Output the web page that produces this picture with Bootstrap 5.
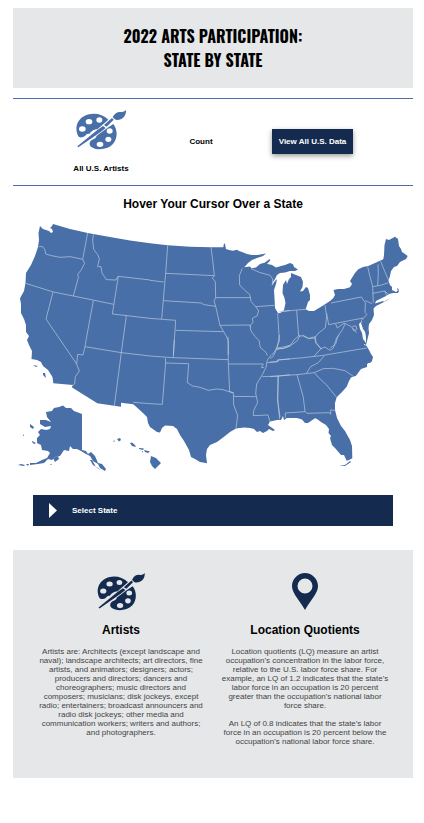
<!DOCTYPE html>
<html lang="en">
<head>
<meta charset="utf-8">
<meta name="viewport" content="width=device-width, initial-scale=1">
<title>2022 Arts Participation: State by State</title>
<link href="https://cdn.jsdelivr.net/npm/bootstrap@5.3.0/dist/css/bootstrap.min.css" rel="stylesheet">
<style>
:root { --navy: #142b4f; --blue: #486fa7; --panel: #e5e7e9; }
body { font-family: "Liberation Sans", Arial, sans-serif; font-size: 8px; line-height: 9px; color: #000; background: #fff; }
.page { padding: 8px 11px 40px 13px; }
.panel { background: var(--panel); }
.page-title { font-family: Oswald, "Liberation Sans Narrow", "Liberation Sans", sans-serif; font-size: 16px; line-height: 24px; font-weight: 700; }
.summary { display: grid; grid-template-columns: 112fr 88fr 135fr; margin-top: 10px; padding: 11px 33px 12px 32px; border: solid var(--blue); border-width: 1px 0; }
.summary-artists { gap: 14px; }
.summary .palette { width: 50px; height: 40px; color: var(--blue); }
.btn-navy { background: var(--navy); color: #fff; font-size: 8px; line-height: 9px; font-weight: 700; padding: 8px 7px; border: 0; border-radius: 0; white-space: nowrap; box-shadow: 0 2px 5px rgba(0,0,0,.4); }
.btn-navy:hover { background: var(--blue); color: #fff; }
.section-title { font-size: 12px; line-height: 14px; font-weight: 700; }
.map-title { padding: 11px 0 1px; }
.map { display: block; width: 100%; height: auto; }
.select-wrap { padding: 15px 20px 24px; }
.select-bar { background: var(--navy); color: #fff; font-size: 8px; line-height: 9px; font-weight: 700; padding: 8px 16px; gap: 14px; border: 0; }
.info { padding: 23px 16px; }
.info p { color: #444; margin-bottom: 9px; }
.info .icon-box { height: 40px; color: var(--navy); }
.info .section-title { margin: 10px 0; }
.info .col { padding: 0 8px; }
</style>
<script src="https://cdn.jsdelivr.net/npm/bootstrap@5.3.0/dist/js/bootstrap.bundle.min.js"></script>
</head>
<body>
<svg width="0" height="0" class="position-absolute" aria-hidden="true">
  <symbol id="palette" viewBox="0 0 150 120">
    <path fill="currentColor" fill-rule="evenodd" d="M7 79C-4 58 1 34 20 21C43 6 76 8 97 29L64 58C52 58 45 65 40 72C29 69 30 81 18 82C13 83 9 82 7 79ZM29 57a10 8 0 1 0-20 0a10 8 0 1 0 20 0ZM49 35a10 8 0 1 0-20 0a10 8 0 1 0 20 0ZM79 30a9 8 0 1 0-18 0a9 8 0 1 0 18 0Z"/>
    <path fill="currentColor" fill-rule="evenodd" d="M112 42C126 61 125 87 110 103C94 120 60 122 45 110C37 103 41 92 52 88C60 85 62 78 62 77L95 53ZM110 63a9 8 0 1 0-18 0a9 8 0 1 0 18 0ZM106 88a9 8 0 1 0-18 0a9 8 0 1 0 18 0ZM82 103a10 8 0 1 0-20 0a10 8 0 1 0 20 0Z"/>
    <path fill="currentColor" d="M84 45L108 24L113 29L92 50ZM81 48L89 54L75 65L7 112L4 109L64 60ZM110 21C117 9 124 5 134 6C143 7 147 3 150 0C151 17 140 29 124 30C119 30 114 27 110 21Z"/>
  </symbol>
</svg>
<main class="page">
  <header class="panel text-center p-3">
    <h1 class="page-title m-0">2022 ARTS PARTICIPATION:<br>STATE BY STATE</h1>
  </header>

  <section class="summary align-items-center text-center fw-bold">
    <div class="summary-artists d-flex flex-column align-items-center">
      <svg class="palette" aria-hidden="true"><use href="#palette"/></svg>
      <span>All U.S. Artists</span>
    </div>
    <div>Count</div>
    <div><button type="button" class="btn btn-navy">View All U.S. Data</button></div>
  </section>

  <h2 class="section-title map-title text-center m-0">Hover Your Cursor Over a State</h2>

  <svg class="map" viewBox="13 212 400 268" role="img" aria-label="Map of the United States">
    <g fill="#486fa7">
      <path d="M40 226L43 229L46 230L49 231L51 233L53 232L52 229L50 228L52 226L53 224L70 229L87.700 233L110 237L130 240.500L150 243.300L167.700 245.300L190 246.700L211 247.300L223.300 247.300L224 243.300L225 244L226 249L229 250L233 250.700L237 249.700L239 251L242 252L247 254L252 255L257.500 255L266 253.500L263 256L257 258L252 260L248 263L244.300 267.300L250 266.500L251.500 268.300L256 267.500L260 264L265 262.500L269.300 259.300L270.500 260L267 264L270 264.500L272 265L276 267.500L281 266L285 265L290 263L293 264.300L294 267L298 269.500L295 271L290 271L285 272.500L280 273L277 275L275 279L273 282L271.500 286L275 281L277 279L276 284L274 290L274.500 298L275 308L278 313L280 313.300L284 310L285.500 303L284.500 298L282.500 293L283 285L286 280L287 284L289 279L291 277L291 273L296 275L301 277L303 282L302.500 287L300 291.500L303 291L306 287L308 288L310 295L310 300L308 302L305.700 309.300L309 311L314 311L319 308L325 304.300L330 301L333.300 298L335 295L333.500 290L338 289L344 289L350 287.300L352 284L350 281L355 273L358.300 269.300L363 267L368.300 266L380 260.700L383.300 259.300L384 255L384.500 245L386 239L389 240L395 236.700L398 239L399 246L401 249L402 252L405 254L407.700 256L406 259L402 261L400 262L397 266L394 267L391 271L390 276L388.500 281L390 285L392 287L392 290L396 292L398 290.500L397 289L398 288L399 291L398 293L393 293L389 294L386 296L376 301L375 303.500L383 301L384 302L376 306L373.500 308.500L374 315L372 320L369 324L368.500 328L369 333L367 341L366 345L369 350L371 354L373 357L372 361L367 364L367 367L361 369L358 373L356 375.700L351 377.500L349 381L346.700 386.700L342 392L336.700 397.300L335 403L335 410L337 418L341 426L345 431L350 440L352 446L352.300 458.300L349 460L346.700 460.700L344 455L341 455L338 451.500L335 448L332 445L330 438.300L331 436L328.500 433L329 429L326 425L321 422L317 419L315 418.300L308 423L305 423L302 419.500L297 418L286.700 418L284 420L283 416L281 420L277 420L270 421.500L268 425L275 430L273 431L269 429L267 431L263 433L260 431L257 432L254 429L250 428L244 427.500L236 428.500L230 432L225 436L217 442L210 445L207 449L206 455L207 463.300L200 462L195 459L191 457L189 450L184 441L180 435L177 429L173 426L165 425.500L162 428L160 432.500L157 432L150 427L148 423L147 417L143 413L133.300 404.300L121 402.700L121 406.700L97.300 403.300L71.700 387.300L73 385L53.300 383.300L52.500 377L48 370L43 366L41 362L37 360L31.500 359L32 351L29 345L27 340L29 336L26 332L26 325L24 319L21 313L21 304L20 298.300L24 291L25.500 283L26 273L31 265L35 256L38 247L39 240L38.500 233Z"/>
      <path d="M386 301L391 298L383 302ZM33 365L38 366L36 367ZM43 373L45 373L46 378L43 375ZM339 466L345 465L350 461L351 462L345 466ZM372 361L369 359L366 362L370 363Z"/>
      <path d="M46 412L52 411L54 408L59 407L63 405.500L66 408L71 408L74 411L82 414L82 450L86 451L88 454L91 452L95 456L98 463L102 464L106 469L105 471L100 468L98 464L93 461L90 456L86 454L81 451L77 449L73 449L70 446L69 451L64 450L60 456L55 457L52 460L48 459L44 463L38 464L30 465L30 463L36 463L42 460L47 458L50 453L48 451L42 450L41 445L37 443L37 438L40 435L38 432L41 429L46 430L50 429L51 426L45 427L40 424L40 420L46 420L51 422L47 417Z"/>
      <path d="M53 458L58 456L59 459L55 462ZM30 424L34 427L33 429L30 427ZM32 441L36 443L34 444L32 442ZM23 434L24 436L23 436ZM18 465L21 464L25 465L24 466ZM26 464L29 464L28 466ZM50 464L52 464L51 465ZM90 460L92 460L96 467L101 471L98 468L93 465ZM117 439L120 438L121 440L119 441.500ZM113 441L115 440.500L114 442ZM130 443L132 442.500L135 445L136 447L132 446ZM139 448L144 448.500L143 450L139 449ZM144 450L150 451.500L148 453L145 452ZM142 451L143 451L143 453ZM151 456L156 458L161 463L155 469L152 466L150 462Z"/>
    </g>
    <g fill="none" stroke="#bfcde1" stroke-width="2" stroke-linejoin="round">
      <path transform="translate(10 215) scale(.333333)" d="M86 95L98 95L105 105L107 117L125 122L150 127L180 125L218 133M233 54L218 133L224 145L214 164L202 180L206 184L190 243M250 58L248 75L251 103L263 119L268 131L263 155L273 155L276 174L289 194L318 195L324 184M420 195L325 184L307 297L420 310M47 205L130 231L190 243L311 268M129 231L108 312L138 356M250 257L231 360M349 302L342 354"/>
      <path transform="translate(10 335) scale(.333333)" d="M138 -4L200 87L208 108L196 125L194 147L185 153M200 87L203 58L219 60L225 35L231 0M225 35L334 53L420 63M342 -6L334 53L313 212M370 202L420 206"/>
      <path transform="translate(150 235) scale(.333333)" d="M0 136L41 141M53 31L47 115L35 252M0 250L77 256L70 360M47 115L193 122M183 37L188 75L193 122L187 130L196 140L197 188L192 198L197 214L210 271L227 300L235 318L235 360M41 197L154 204L162 209L197 214M77 286L220 290M197 188L301 188M210 271L299 270L303 277M277 100L268 122L269 150L284 166L299 178L303 199L317 215L326 228L321 243L307 250L309 262L300 272L303 288L315 304L328 318L330 336L348 352L352 362M317 215L373 211M303 101L328 112L360 121L368 132L367 150M383 234L388 318L377 345L366 360M388 230L420 226M378 344L399 340L420 333"/>
      <path transform="translate(150 340) scale(.333333)" d="M0 48L70 53L235 59M73 0L70 53M46 54L47 69L116 71L112 128L128 138L150 142L175 151L200 147L219 149L234 154L250 159M47 69L37 193L0 191M234 -10L235 70L239 155L250 158L251 195L263 226L258 265M235 72L340 72L334 82L342 83M251 169L317 170M364 44L352 60L348 82L337 104L320 132L317 160L323 187L311 212L310 227L354 225L360 245M337 110L385 108L420 104M385 109L383 180L389 238M352 68L384 65L384 60L420 57"/>
      <path transform="translate(270 230) scale(.333333)" d="M26 246L80 240L109 238M80 241L86 318L72 330L62 345L45 350L23 354M86 318L100 318L116 326L134 324L144 311L166 293L170 260L165 225M134 324L138 340L155 358M170 250L176 284L280 264L291 254L285 247L286 218L274 201L183 219M286 212L306 221M197 282L202 294L218 282L225 280L245 291L260 308M225 282L218 298L204 318L197 342L181 354M280 264L274 272L281 291L293 304M247 289L258 288L261 297L252 303L246 294M293 110L300 140L305 158L308 170L310 218M308 170L335 165L355 158M324 103L325 130L323 167M332 94L345 126L357 153M308 190L344 183L350 198M344 183L356 193"/>
      <path transform="translate(270 335) scale(.333333)" d="M0 81L22 80L22 75L100 68L160 61L290 39M0 125L80 119L133 113L160 101L187 100L205 103L225 107L250 124M29 0L24 25L21 40L10 64L0 70M21 40L40 41L62 32L84 15L90 0M97 0L116 10L136 5L138 22L153 41L132 64M153 41L164 36L180 46L190 39L200 8L208 0M163 62L145 83L122 95L110 114M133 113L148 130L170 150L184 168L200 187M24 123L23 195L30 246M81 119L100 187L105 230M46 248L46 234L106 230L111 235L178 233L182 238L182 225L197 226"/>
    </g>
    <path fill="#fff" d="M359 324L361 322L363 329L366 333L366 343L363 339L362 333L360 329ZM364 344L368 346L364 345Z"/>
    <path fill="none" stroke="#486fa7" stroke-width="2" d="M362 323L366 330L367 337"/>
  </svg>

  <div class="select-wrap">
    <button type="button" class="select-bar d-flex align-items-center text-start w-100">
      <svg width="9" height="15" viewBox="0 0 9 15" aria-hidden="true"><path fill="#fff" d="M0 0L8 7.500L0 15Z"/></svg>
      <span>Select State</span>
    </button>
  </div>

  <section class="panel info">
    <div class="row g-0 text-center">
      <div class="col">
        <div class="icon-box"><svg width="48" height="38" aria-hidden="true"><use href="#palette"/></svg></div>
        <h2 class="section-title">Artists</h2>
        <p>Artists are: Architects (except landscape and naval); landscape architects; art directors, fine artists, and animators; designers; actors; producers and directors; dancers and choreographers; music directors and composers; musicians; disk jockeys, except radio; entertainers; broadcast announcers and radio disk jockeys; other media and communication workers; writers and authors; and photographers.</p>
      </div>
      <div class="col">
        <div class="icon-box"><svg width="26" height="38" viewBox="0 0 26 38" aria-hidden="true"><path fill="currentColor" fill-rule="evenodd" d="M13 0C20 0 26 6 26 13C26 20 20 25 13 37C6 25 0 20 0 13C0 6 6 0 13 0ZM20.500 13a7.500 7.500 0 1 0-15 0a7.500 7.500 0 1 0 15 0Z"/></svg></div>
        <h2 class="section-title">Location Quotients</h2>
        <p>Location quotients (LQ) measure an artist occupation's concentration in the labor force, relative to the U.S. labor force share. For example, an LQ of 1.2 indicates that the state's labor force in an occupation is 20 percent greater than the occupation's national labor force share.</p>
        <p>An LQ of 0.8 indicates that the state's labor force in an occupation is 20 percent below the occupation's national labor force share.</p>
      </div>
    </div>
  </section>
</main>
</body>
</html>
